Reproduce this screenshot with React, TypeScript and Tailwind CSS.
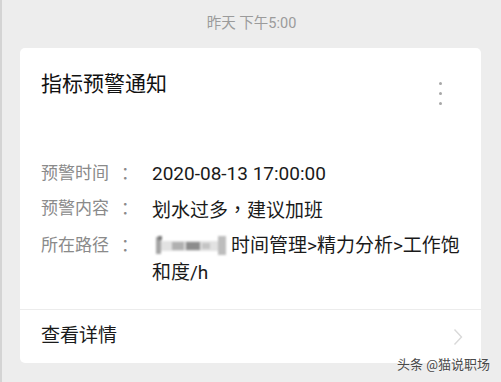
import React from 'react';

const font = { fontFamily: '"Roboto", "Noto Sans CJK SC", sans-serif' };

function InfoRow({ label, children }: { label: string; children: React.ReactNode }) {
  return (
    <div className="flex items-start leading-[27px]">
      <div className="flex w-[111px] shrink-0 text-[17px] text-[#8a8a8a]">
        <span>{label}</span>
        <span className="ml-[12px]">：</span>
      </div>
      <div className="w-[315px] text-[19px] text-[#1a1a1a]">{children}</div>
    </div>
  );
}

function BlurredPath() {
  // mosaic over the hidden part of the path
  return (
    <span className="relative ml-[4px] mr-[5px] inline-block h-[19px] w-[70px] align-[-3px] blur-[1.2px]">
      <span className="absolute left-0 top-[1px] h-[17px] w-[5px] bg-[#a4a4a4]" />
      <span className="absolute left-[2px] top-0 h-[4px] w-[4px] bg-[#777]" />
      <span className="absolute left-[5px] top-[5px] h-[10px] w-[58px] bg-[#e2e2e2]" />
      <span className="absolute left-[16px] top-[6px] h-[8px] w-[12px] bg-[#b0b0b0]" />
      <span className="absolute left-[30px] top-[6px] h-[8px] w-[14px] bg-[#8c8c8c]" />
      <span className="absolute left-[46px] top-[7px] h-[6px] w-[8px] bg-[#c4c4c4]" />
      <span className="absolute left-[62px] top-0 h-[19px] w-[8px] bg-[#bdbdbd]" />
    </span>
  );
}

export default function App() {
  return (
    <div
      className="relative h-[382px] w-[501px] overflow-hidden border-l-2 border-[#d4d4d4] bg-[#ededed]"
      style={font}
    >
      {/* timestamp */}
      <div className="flex h-[48px] items-center justify-center text-[14.5px] text-[#9b9b9b]">
        昨天 下午5:00
      </div>

      {/* card */}
      <div className="ml-[18px] mr-[20px] rounded-[5px] bg-white">
        <div className="flex h-[48px] items-start justify-between pl-[21px] pr-[39px] pt-[24px]">
          <div className="text-[21px] leading-[24px] text-[#111]">指标预警通知</div>
          <div className="mt-[10px] flex h-[24px] flex-col gap-[7px]">
            <span className="h-[3px] w-[3px] shrink-0 rounded-full bg-[#a8a8a8]" />
            <span className="h-[3px] w-[3px] shrink-0 rounded-full bg-[#a8a8a8]" />
            <span className="h-[3px] w-[3px] shrink-0 rounded-full bg-[#a8a8a8]" />
          </div>
        </div>

        <div className="flex flex-col gap-[8px] pb-[23px] pl-[21px] pt-[64px]">
          <InfoRow label="预警时间">2020-08-13 17:00:00</InfoRow>
          <InfoRow label="预警内容">
            划水过多
            <span style={{ fontFamily: '"Noto Sans CJK TC", sans-serif' }}>，</span>
            建议加班
          </InfoRow>
          <InfoRow label="所在路径">
            <BlurredPath />
            时间管理&gt;精力分析&gt;工作饱和度/h
          </InfoRow>
        </div>

        <div className="h-px bg-[#ececec]" />

        <div className="flex h-[53px] items-center justify-between pl-[21px] pr-[18px]">
          <span className="text-[19px] text-[#1a1a1a]">查看详情</span>
          <svg width="10" height="18" viewBox="0 0 10 18" fill="none">
            <polyline points="1.5,1.5 8.5,9 1.5,16.5" stroke="#d9d9d9" strokeWidth="1.4" />
          </svg>
        </div>
      </div>

      {/* watermark */}
      <div className="absolute bottom-[9px] right-[11px] text-[13px] leading-[16px] text-[#4a4a4a] [text-shadow:0_0_2px_#fff]">
        头条 @猫说职场
      </div>
    </div>
  );
}
